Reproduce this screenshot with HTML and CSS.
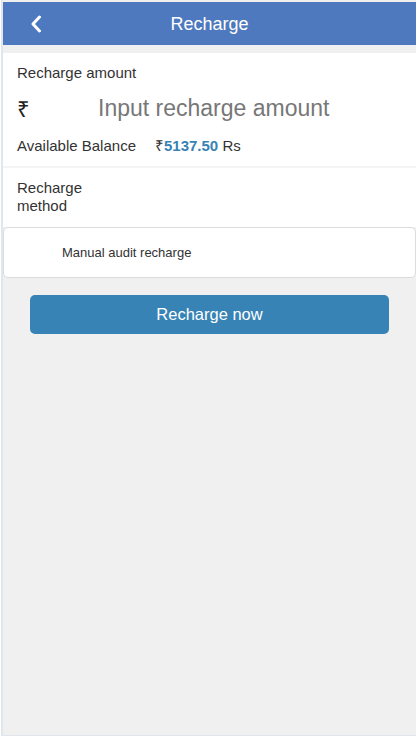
FILE: index.html
```html
<!DOCTYPE html>
<html lang="en">
<head>
    <meta charset="UTF-8">
    <meta name="viewport" content="width=device-width, initial-scale=1.0">
    <title>Recharge</title>
    <link rel="stylesheet" href="styles.css">
</head>
<body>
    <div class="page">
        <header class="top-bar">
            <a class="back" href="#">
                <svg width="12" height="18" viewBox="0 0 12 18">
                    <path d="M9.5 2 L3 9 L9.5 16" fill="none" stroke="#fff" stroke-width="3" stroke-linecap="round" stroke-linejoin="round"/>
                </svg>
            </a>
            <h1>Recharge</h1>
        </header>

        <section class="amount-box">
            <div class="label">Recharge amount</div>
            <div class="amount-row">
                <span class="rupee">₹</span>
                <input type="text" placeholder="Input recharge amount">
            </div>
            <div class="balance">
                <span>Available Balance</span>
                <span class="balance-value">₹<b>5137.50</b> Rs</span>
            </div>
        </section>

        <section class="method-box">
            <div class="method-label">Recharge method</div>
        </section>

        <div class="method-card">
            <span>Manual audit recharge</span>
        </div>

        <div class="btn-wrap">
            <button class="btn-recharge">Recharge now</button>
        </div>
    </div>
</body>
</html>
```

FILE: styles.css
```css
* {
    margin: 0;
    padding: 0;
    box-sizing: border-box;
}

body {
    font-family: "Liberation Sans", Arial, sans-serif;
    background-color: #fff;
    color: #333;
}

.page {
    margin-left: 1px;
    min-height: 736px;
    border-left: 2px solid #e1e6ed;
    border-bottom: 1px solid #e1e6ed;
    background-color: #f0f0f0;
    padding-top: 2px;
}

.top-bar {
    height: 43px;
    padding-top: 1px;
    background-color: #4f79be;
    display: flex;
    align-items: center;
    justify-content: center;
    position: relative;
}

.back {
    position: absolute;
    left: 27px;
    top: 13px;
}

.top-bar h1 {
    font-size: 18px;
    font-weight: normal;
    color: #fff;
}

.amount-box {
    margin-top: 8px;
    background-color: #fff;
    padding: 11px 14px 12px 14px;
    border-bottom: 2px solid #f4f4f4;
}

.label {
    font-size: 15px;
    line-height: 17px;
}

.amount-row {
    display: flex;
    align-items: center;
    height: 42px;
    margin-top: 6px;
}

.rupee {
    font-size: 22px;
    width: 81px;
    color: #222;
}

.amount-row input {
    border: none;
    outline: none;
    font-family: inherit;
    font-size: 23px;
    color: #333;
    width: 260px;
    background: transparent;
}

.amount-row input::placeholder {
    color: #777;
}

.balance {
    display: flex;
    gap: 19px;
    font-size: 15px;
    line-height: 17px;
    margin-top: 8px;
}

.balance-value b {
    color: #3783b5;
}

.method-box {
    background-color: #fff;
    padding: 11px 14px 12px;
}

.method-label {
    width: 80px;
    font-size: 15px;
    line-height: 18px;
}

.method-card {
    background-color: #fff;
    border: 1px solid #dcdcdc;
    border-radius: 5px;
    height: 51px;
    display: flex;
    align-items: center;
    padding-left: 58px;
    font-size: 13px;
    color: #333;
}

.btn-wrap {
    padding: 17px 27px 0 27px;
}

.btn-recharge {
    width: 100%;
    height: 39px;
    border: none;
    border-radius: 5px;
    background-color: #3783b5;
    color: #fff;
    font-family: inherit;
    font-size: 16.5px;
}
```
